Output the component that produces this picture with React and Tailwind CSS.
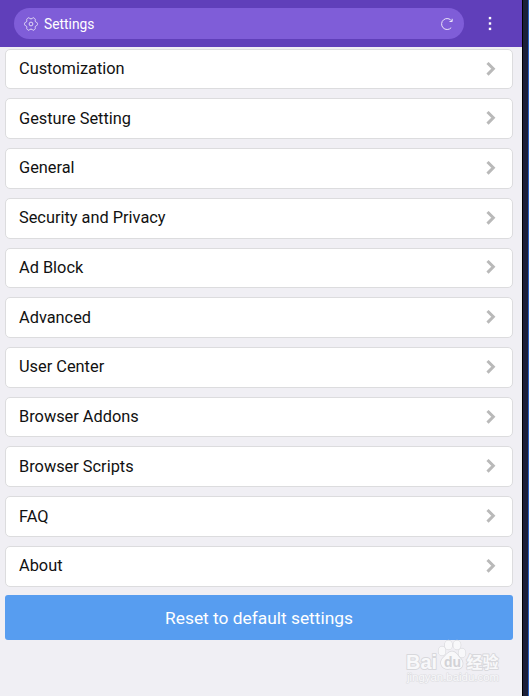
import React from "react";

const items = [
  "Customization",
  "Gesture Setting",
  "General",
  "Security and Privacy",
  "Ad Block",
  "Advanced",
  "User Center",
  "Browser Addons",
  "Browser Scripts",
  "FAQ",
  "About",
];

const GearIcon = () => (
  <svg className="h-[14px] w-[14px] shrink-0" viewBox="0 0 14 14" fill="none" stroke="#e3dbf5" strokeWidth="1">
    <path
      d="M3.700 1.200 Q4.600 .3 5.400 1.200 Q7 2.800 8.600 1.200 Q9.400 .3 10.300 1.200 L11 1.900 Q11.500 2.500 11.200 3.300 Q10.900 5 12.500 5.400 Q13.400 5.600 13.400 6.300 V7.700 Q13.400 8.400 12.500 8.600 Q10.900 9 11.200 10.700 Q11.500 11.500 11 12.100 L10.300 12.800 Q9.400 13.700 8.600 12.800 Q7 11.200 5.400 12.800 Q4.600 13.700 3.700 12.800 L3 12.100 Q2.500 11.500 2.800 10.700 Q3.100 9 1.500 8.600 Q.6 8.400 .6 7.700 V6.300 Q.6 5.600 1.500 5.400 Q3.100 5 2.800 3.300 Q2.500 2.500 3 1.900 Z"
      strokeLinejoin="round"
    />
    <circle cx="7" cy="7" r="1.900" />
  </svg>
);

const ReloadIcon = () => (
  <svg className="h-[14px] w-[14px] shrink-0" viewBox="0 0 14 14" fill="none" stroke="#e9e3f8" strokeWidth="1">
    <path d="M11.200 10.700A5.500 5.500 0 1 1 11.700 4" />
    <path d="M12.200 1.800v2.700H9.500" />
  </svg>
);

const Chevron = () => (
  <svg className="h-[15px] w-[10px] shrink-0" viewBox="0 0 10 15" fill="none" stroke="#b9b9b9" strokeWidth="3">
    <path d="M1.500 1 7.300 6.800 1.500 12.600" />
  </svg>
);

const Watermark = () => (
  <svg
    className="absolute left-[400px] top-[636px] h-[54px] w-[106px]"
    viewBox="0 0 106 54"
    fill="#f8f8fa"
    stroke="#d8d8dc"
    strokeWidth="1.300"
    paintOrder="stroke"
    strokeLinejoin="round"
    fontFamily="'Liberation Sans', 'Noto Sans CJK SC', sans-serif"
  >
    <ellipse cx="48.500" cy="9" rx="3.700" ry="4.500" />
    <ellipse cx="57" cy="9" rx="3.700" ry="4.500" />
    <ellipse cx="42" cy="15" rx="3.500" ry="4.500" />
    <ellipse cx="62" cy="17" rx="3.500" ry="4.500" />
    <path d="M52 15.500c4 0 5.500 4 8 6.500 4 3.500 4 11-3 11-3 0-6-.7-9 0-7 0-9-7-5-11 3-2.500 5-6.500 9-6.500z" />
    <g fontWeight="bold">
      <text x="6" y="32.500" fontSize="21" strokeWidth="2" textLength="31" lengthAdjust="spacingAndGlyphs">Bai</text>
      <text x="44" y="31" fontSize="14" textLength="17" lengthAdjust="spacingAndGlyphs" fill="#d2d2d6" stroke="none">du</text>
      <text x="66.500" y="32" fontSize="16" strokeWidth="1.800" fontFamily="'Noto Sans CJK SC', sans-serif">经验</text>
      <text x="7" y="45" fontSize="10.500" fontWeight="normal" strokeWidth="1.200" stroke="#dedee2" textLength="92" lengthAdjust="spacingAndGlyphs">jingyan.baidu.com</text>
    </g>
  </svg>
);

const Header = () => (
  <header className="flex h-[47px] items-center bg-[#603fba] pl-[14px]">
    <div className="flex h-[31px] w-[450px] items-center rounded-full bg-[#7f5dd8] px-[10px]">
      <GearIcon />
      <span className="ml-[6px] mt-px text-[13.800px] leading-5 text-white">Settings</span>
      <div className="ml-auto">
        <ReloadIcon />
      </div>
    </div>
    <svg className="ml-[24px] h-[15px] w-[4px]" viewBox="0 0 4 15" fill="#fff">
      <rect x="0.800" y="0.900" width="2.400" height="2.400" />
      <rect x="0.800" y="6.300" width="2.400" height="2.400" />
      <rect x="0.800" y="11.700" width="2.400" height="2.400" />
    </svg>
  </header>
);

const SettingRow = ({ label }) => (
  <button className="flex h-[40.720px] w-full items-center justify-between rounded-[5px] border border-[#dcdcde] bg-white pl-[13px] pr-[16px] text-left">
    <span className="text-[16.350px] leading-6 text-[#111]">{label}</span>
    <Chevron />
  </button>
);

export default function App() {
  return (
    <div className="relative flex h-[696px] w-[529px] overflow-hidden bg-[#f0eff4] font-['Roboto',sans-serif]">
      <div className="w-[522px]">
        <Header />
        <main className="pl-[5px] pr-[9px] pt-[1.700px]">
          <div className="flex flex-col gap-[9px]">
            {items.map((label) => (
              <SettingRow key={label} label={label} />
            ))}
          </div>
          <button className="mt-[8.700px] h-[45px] w-full rounded-[3px] bg-[#579df0] text-[17.350px] text-white">
            Reset to default settings
          </button>
        </main>
      </div>
      <div className="w-px bg-black" />
      <div className="w-[5px] bg-[#1c1f38]" />
      <div className="w-px bg-[#2a62c4]" />
      <Watermark />
    </div>
  );
}
